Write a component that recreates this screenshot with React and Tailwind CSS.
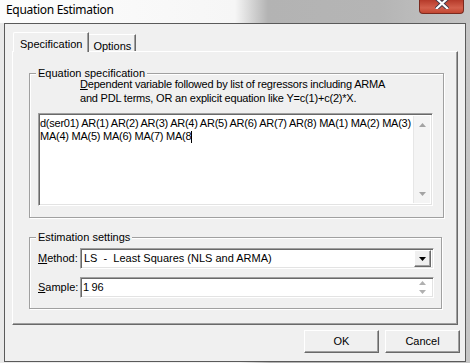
import React from 'react'

const font = { fontFamily: '"Liberation Sans", Arial, sans-serif' }

function Triangle({ dir = 'down', color = '#000', w = 7, h = 4 }) {
  const pts = dir === 'down' ? `0,0 ${w},0 ${w / 2},${h}` : `0,${h} ${w},${h} ${w / 2},0`
  return (
    <svg width={w} height={h} viewBox={`0 0 ${w} ${h}`} className="block">
      <polygon points={pts} fill={color} />
    </svg>
  )
}

function Sunken({ className = '', children }) {
  return (
    <div
      className={`border border-t-[#a0a0a0] border-l-[#a0a0a0] border-b-white border-r-white shadow-[inset_1px_1px_0_#696969,inset_-1px_-1px_0_#e3e3e3] bg-white ${className}`}
    >
      {children}
    </div>
  )
}

function Group({ title, className = '', children }) {
  return (
    <div
      className={`relative border border-[#a0a0a0] shadow-[inset_1px_1px_0_#fff,1px_1px_0_#fff] ${className}`}
    >
      <span className="absolute -top-[7px] left-[6px] bg-[#f0f0f0] px-[2px] leading-[13px]">{title}</span>
      {children}
    </div>
  )
}

function Button({ children }) {
  return (
    <button className="w-[75px] h-[23px] bg-[#f0f0f0] border border-t-white border-l-white border-b-[#696969] border-r-[#696969] shadow-[inset_-1px_-1px_0_#a0a0a0] text-[11px] text-black">
      {children}
    </button>
  )
}

export default function App() {
  return (
    <div
      className="w-[470px] h-[363px] overflow-hidden relative flex flex-col bg-[linear-gradient(90deg,#e9e9e9_0,#f2f2f2_240px,#b2b2b2_270px,#b6b6b6_380px,#c6c6c6_470px)] text-[11px] text-black"
      style={font}
    >
      {/* title bar */}
      <div className="h-[23px] shrink-0 flex items-center pl-[6px] pb-[4px] bg-[linear-gradient(90deg,#fdfdfd_0,#f6f6f6_235px,#b3b3b3_268px,#b5b5b5_380px,#c4c4c4_470px)]">
        <span className="text-[12px] tracking-[-0.3px] text-black" style={{ fontFamily: '"Noto Sans", "Open Sans", sans-serif' }}>
          Equation Estimation
        </span>
      </div>
      <div className="absolute left-[419px] top-0 w-[45px] h-[14px] rounded-b-[4px] border border-t-0 border-[#7a2a1f] bg-[linear-gradient(180deg,#b53a2a_0,#d3604c_60%,#c24631_100%)] flex justify-center">
        <svg width="14" height="9" viewBox="0 0 14 9" className="block">
          <path d="M1 -2 L13 9 M13 -2 L1 9" stroke="#3a3a4a" strokeWidth="4" />
          <path d="M1 -2 L13 9 M13 -2 L1 9" stroke="#fff" strokeWidth="2.2" />
        </svg>
      </div>

      {/* dialog */}
      <div className="mx-[4px] h-[339px] border border-[#5a5a5a] bg-[#f0f0f0] flex flex-col px-[7px] pt-[8px]">
        {/* tabs */}
        <div className="flex items-end h-[20px] pl-[1px] relative z-10">
          <div className="h-[20px] px-[6px] pt-[3px] bg-[#f0f0f0] border-l border-t border-r border-l-white border-t-white border-r-[#696969] rounded-tl-[2px] shadow-[inset_-1px_0_0_#a0a0a0]">
            Specification
          </div>
          <div className="h-[17px] mb-[1px] px-[4px] pt-[3px] border-t border-r border-t-white border-r-[#696969] shadow-[inset_-1px_0_0_#a0a0a0]">
            Options
          </div>
        </div>
        {/* panel */}
        <div className="-mt-[1px] h-[274px] border border-t-white border-l-white border-b-[#696969] border-r-[#696969] shadow-[inset_-1px_-1px_0_#a0a0a0] pl-[16px] pt-[21px]">
          <Group title="Equation specification" className="w-[415px] h-[145px]">
            <div className="pl-[50px] pt-[3px] leading-[14px] tracking-[-0.2px]">
              <div>
                <span className="underline">D</span>ependent variable followed by list of regressors including ARMA
              </div>
              <div>and PDL terms, OR an explicit equation like Y=c(1)+c(2)*X.</div>
            </div>
            <Sunken className="ml-[8px] mt-[8px] w-[395px] h-[93px] flex">
              <div className="flex-1 pl-[1px] pt-[3px] leading-[13px] tracking-[-0.25px]">
                <div>d(ser01) AR(1) AR(2) AR(3) AR(4) AR(5) AR(6) AR(7) AR(8) MA(1) MA(2) MA(3)</div>
                <div className="flex items-center">
                  MA(4) MA(5) MA(6) MA(7) MA(8
                  <span className="inline-block w-[1px] h-[12px] bg-black" />
                </div>
              </div>
              <div className="w-[17px] my-[2px] mr-[2px] bg-[#f4f4f4] border-l border-[#e6e6e6] flex flex-col justify-between items-center py-[7px]">
                <Triangle dir="up" color="#a3a3a3" />
                <Triangle dir="down" color="#a3a3a3" />
              </div>
            </Sunken>
          </Group>

          <Group title="Estimation settings" className="mt-[19px] w-[413px] h-[72px] pt-[10px] pl-[8px]">
            <div className="flex items-center h-[21px]">
              <span className="w-[42px]">
                <span className="underline">M</span>ethod:
              </span>
              <Sunken className="w-[354px] h-[21px] flex items-center">
                <span className="flex-1 pl-[3px] whitespace-pre">LS  -  Least Squares (NLS and ARMA)</span>
                <div className="w-[17px] h-[17px] mr-[2px] bg-[#f0f0f0] border border-t-white border-l-white border-b-[#696969] border-r-[#696969] shadow-[inset_-1px_-1px_0_#a0a0a0] flex items-center justify-center">
                  <Triangle dir="down" color="#000" w={7} h={4} />
                </div>
              </Sunken>
            </div>
            <div className="flex items-center h-[21px] mt-[8px]">
              <span className="w-[42px]">
                <span className="underline">S</span>ample:
              </span>
              <Sunken className="w-[354px] h-[21px] flex items-center">
                <span className="flex-1 pl-[2px] tracking-[-0.3px]">1 96</span>
                <div className="w-[17px] h-[17px] mr-[2px] flex flex-col justify-around items-center">
                  <Triangle dir="up" color="#b0b0b0" w={7} h={4} />
                  <Triangle dir="down" color="#b0b0b0" w={7} h={4} />
                </div>
              </Sunken>
            </div>
          </Group>
        </div>
        {/* buttons */}
        <div className="flex justify-end gap-[6px] mt-[5px] -mr-[2px]">
          <Button>OK</Button>
          <Button>Cancel</Button>
        </div>
      </div>
    </div>
  )
}
